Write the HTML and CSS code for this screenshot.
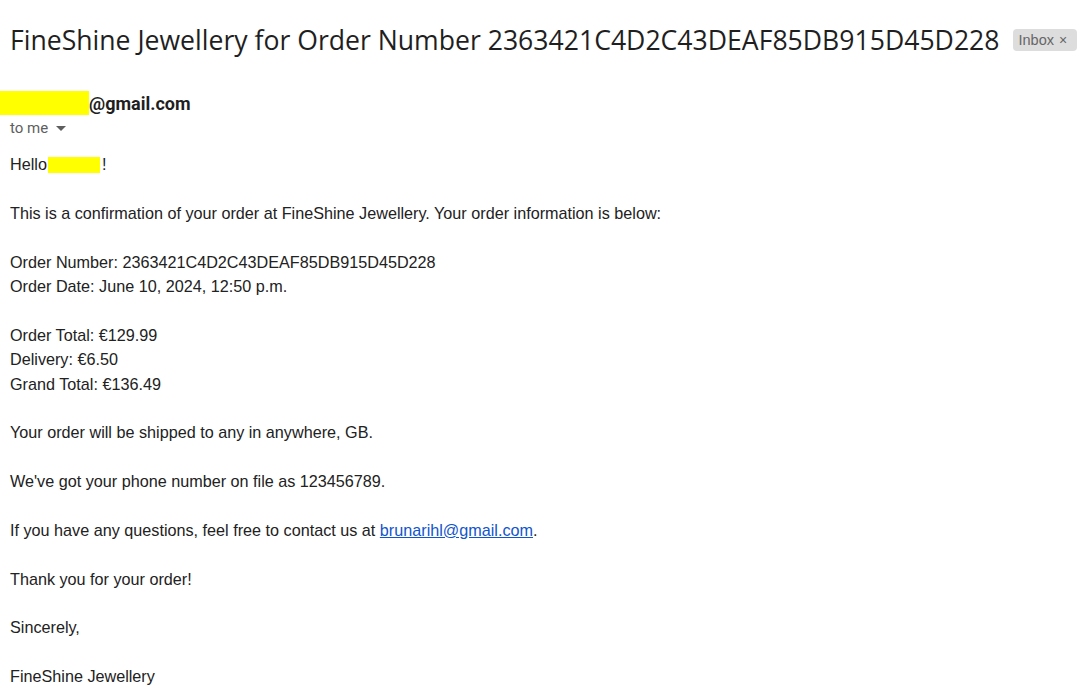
FILE: index.html
```html
<!DOCTYPE html>
<html>
<head>
<meta charset="utf-8">
<link rel="stylesheet" href="styles.css">
</head>
<body>
<div class="page">
  <div class="subject-row">
    <h1 class="subject">FineShine Jewellery for Order Number 2363421C4D2C43DEAF85DB915D45D228</h1>
    <span class="label">Inbox <span class="label-x">×</span></span>
  </div>
  <div class="sender-row">
    <span class="redact redact-sender"></span><span class="sender">@gmail.com</span>
  </div>
  <div class="to-row">to me <span class="caret"></span></div>
  <div class="body">
    <div class="line">Hello<span class="redact redact-name"></span>!</div>
    <div class="gap"></div>
    <div class="line">This is a confirmation of your order at FineShine Jewellery. Your order information is below:</div>
    <div class="gap"></div>
    <div class="line">Order Number: 2363421C4D2C43DEAF85DB915D45D228</div>
    <div class="line">Order Date: June 10, 2024, 12:50 p.m.</div>
    <div class="gap"></div>
    <div class="line">Order Total: €129.99</div>
    <div class="line">Delivery: €6.50</div>
    <div class="line">Grand Total: €136.49</div>
    <div class="gap"></div>
    <div class="line">Your order will be shipped to any in anywhere, GB.</div>
    <div class="gap"></div>
    <div class="line">We've got your phone number on file as 123456789.</div>
    <div class="gap"></div>
    <div class="line">If you have any questions, feel free to contact us at <a class="link" href="#">brunarihl@gmail.com</a>.</div>
    <div class="gap"></div>
    <div class="line">Thank you for your order!</div>
    <div class="gap"></div>
    <div class="line">Sincerely,</div>
    <div class="gap"></div>
    <div class="line">FineShine Jewellery</div>
  </div>
</div>
</body>
</html>
```
FILE: styles.css
```css
html, body {
  margin: 0;
  padding: 0;
  background: #ffffff;
}
.page {
  padding: 0 0 0 10px;
}
.subject-row {
  display: flex;
  align-items: center;
  height: 80px;
  gap: 13px;
}
.subject {
  margin: 0;
  font-family: "Open Sans", sans-serif;
  font-weight: 400;
  font-size: 26.6px;
  color: #1f1f1f;
  white-space: nowrap;
}
.label {
  display: inline-flex;
  align-items: center;
  box-sizing: border-box;
  height: 22px;
  width: 64px;
  background: #dddddd;
  border-radius: 4px;
  font-family: "Liberation Sans", Arial, sans-serif;
  font-size: 14.5px;
  color: #666666;
  padding: 0 6px;
  white-space: nowrap;
}
.label-x {
  font-size: 14px;
  margin-left: 5px;
}
.sender-row {
  display: flex;
  align-items: center;
  height: 24px;
  margin-left: -10px;
  margin-top: 11px;
}
.redact {
  display: inline-block;
  background: #ffff00;
}
.redact-sender {
  width: 89px;
  height: 24px;
}
.sender {
  font-family: "Roboto", "Liberation Sans", sans-serif;
  font-weight: 700;
  font-size: 18px;
  color: #1f1f1f;
}
.to-row {
  font-family: "Roboto", "Liberation Sans", sans-serif;
  font-size: 15px;
  color: #5e5e5e;
  height: 24px;
  line-height: 24px;
  display: flex;
  align-items: center;
  margin-top: 1px;
}
.caret {
  display: inline-block;
  width: 0;
  height: 0;
  border-left: 5px solid transparent;
  border-right: 5px solid transparent;
  border-top: 5px solid #5e5e5e;
  margin-left: 8px;
}
.body {
  margin-top: 12px;
  font-family: "Liberation Sans", Arial, sans-serif;
  font-size: 16.2px;
  color: #222222;
}
.line {
  line-height: 24.4px;
  height: 24.4px;
  white-space: nowrap;
}
.gap {
  height: 24.4px;
}
.redact-name {
  width: 52px;
  height: 16px;
  vertical-align: -3px;
  margin-left: 1px;
  margin-right: 2px;
}
.link {
  color: #1155cc;
  text-decoration: underline;
}
```
